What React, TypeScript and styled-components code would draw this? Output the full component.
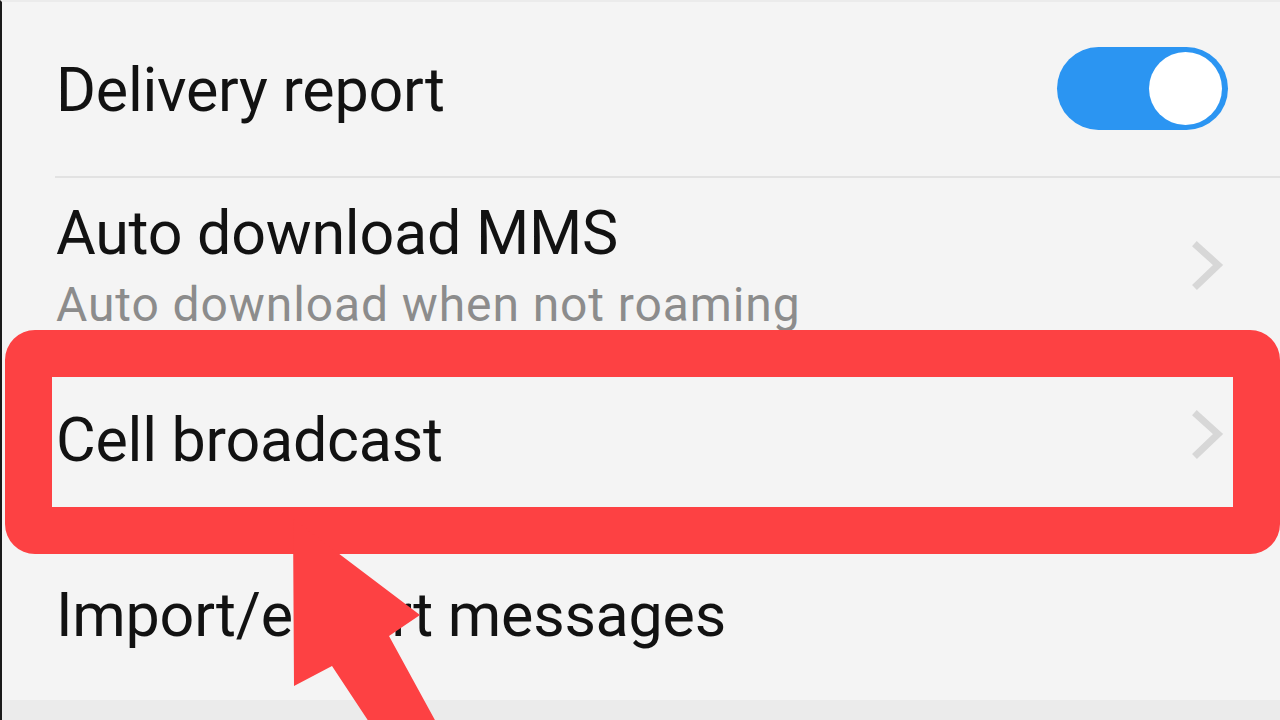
import styled, { createGlobalStyle } from "styled-components";

const GlobalStyle = createGlobalStyle`
  html, body {
    margin: 0;
    padding: 0;
    background: #f4f4f4;
  }
  body {
    font-family: Roboto, "Noto Sans", "Liberation Sans", sans-serif;
  }
`;

const Screen = styled.div`
  position: relative;
  width: 1280px;
  height: 720px;
  overflow: hidden;
  box-sizing: border-box;
  background: #f4f4f4;
  border-left: 2px solid #1a1a1a;
  border-top: 2px solid #ebebeb;
  display: flex;
  flex-direction: column;
`;

const Row = styled.div<{ $height: number; $top: number }>`
  display: flex;
  align-items: flex-start;
  justify-content: space-between;
  box-sizing: border-box;
  height: ${(p) => p.$height}px;
  padding: ${(p) => p.$top}px 52px 0 54px;
  flex-shrink: 0;
`;

const TextCol = styled.div`
  display: flex;
  flex-direction: column;
  gap: 17px;
`;

const Title = styled.div`
  font-size: 61px;
  line-height: 1;
  letter-spacing: -0.25px;
  color: #121212;
  white-space: nowrap;
`;

const Subtitle = styled.div`
  font-size: 48px;
  line-height: 1;
  letter-spacing: 0.9px;
  color: #8c8c8c;
  white-space: nowrap;
`;

const Divider = styled.div`
  height: 2px;
  margin-left: 53px;
  background: #e2e2e2;
  flex-shrink: 0;
`;

const Toggle = styled.div<{ $on: boolean }>`
  position: relative;
  width: 171px;
  height: 83px;
  border-radius: 42px;
  background: ${(p) => (p.$on ? "#2b95f2" : "#cfcfcf")};
  margin-top: -13px;
  flex-shrink: 0;
`;

const Knob = styled.div`
  position: absolute;
  top: 5px;
  right: 6px;
  width: 73px;
  height: 73px;
  border-radius: 50%;
  background: #ffffff;
`;

const Chevron = styled.svg<{ $offset: number }>`
  width: 32px;
  height: 50px;
  margin-top: ${(p) => p.$offset}px;
  margin-right: 4px;
  flex-shrink: 0;
`;

const BottomStrip = styled.div`
  margin-top: auto;
  height: 20px;
  background: #ebebeb;
`;

const Highlight = styled.div`
  position: absolute;
  left: 3px;
  top: 328px;
  width: 1275px;
  height: 224px;
  box-sizing: border-box;
  border: 47px solid #fd4143;
  border-radius: 30px;
  pointer-events: none;
`;

const Arrow = styled.svg`
  position: absolute;
  left: 278px;
  top: 508px;
  width: 170px;
  height: 212px;
  pointer-events: none;
`;

const ChevronIcon = ({ offset }: { offset: number }) => (
  <Chevron $offset={offset} viewBox="0 0 32 50">
    <polyline
      points="5,5 26,24 5,44"
      fill="none"
      stroke="#d7d7d7"
      strokeWidth="7"
      strokeLinecap="square"
      strokeLinejoin="miter"
    />
  </Chevron>
);

export default function App() {
  return (
    <>
      <GlobalStyle />
      <Screen>
        <Row $height={174} $top={58}>
          <Title>Delivery report</Title>
          <Toggle $on>
            <Knob />
          </Toggle>
        </Row>
        <Divider />
        <Row $height={202} $top={25}>
          <TextCol>
            <Title>Auto download MMS</Title>
            <Subtitle>Auto download when not roaming</Subtitle>
          </TextCol>
          <ChevronIcon offset={38} />
        </Row>
        <Row $height={180} $top={30}>
          <Title>Cell broadcast</Title>
          <ChevronIcon offset={0} />
        </Row>
        <Row $height={140} $top={25}>
          <Title>Import/export messages</Title>
        </Row>
        <BottomStrip />
        <Highlight />
        <Arrow viewBox="0 0 170 212">
          <polygon
            points="13,9 140,105 109,126 156,212 89,212 52,156 14,176"
            fill="#fd4143"
          />
        </Arrow>
      </Screen>
    </>
  );
}
